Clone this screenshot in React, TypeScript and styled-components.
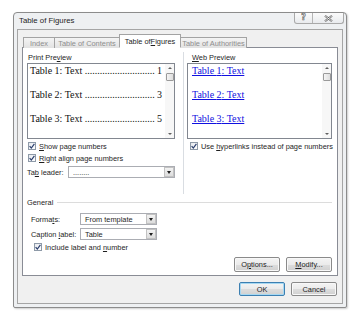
import React from 'react';
import styled, { createGlobalStyle } from 'styled-components';

const GlobalStyle = createGlobalStyle`
  html, body { margin: 0; padding: 0; background: #fff; }
  body {
    font-family: "Liberation Sans", Arial, sans-serif;
    font-size: 7.4px;
    color: #1e1e1e;
  }
  * { box-sizing: border-box; }
`;

const Page = styled.div`
  width: 360px;
  height: 317px;
  padding: 12px 0 0 13px;
`;

const Window = styled.div`
  width: 334px;
  height: 296px;
  border: 1px solid #8c8c8c;
  border-radius: 4px 4px 2px 2px;
  background: #eef0f2;
  padding: 0 3px 3px;
  display: flex;
  flex-direction: column;
  box-shadow: 1px 1px 2px rgba(0, 0, 0, 0.2);
`;

const TitleBar = styled.div`
  height: 16px;
  display: flex;
  align-items: flex-start;
`;

const Title = styled.div`
  padding: 3px 0 0 2px;
  font-size: 7.8px;
  line-height: 10px;
`;

const CaptionButtons = styled.div`
  margin-left: auto;
  margin-right: -1px;
  display: flex;
  height: 11px;
  border: 1px solid #a9a9a9;
  border-top: none;
  border-radius: 0 0 3px 3px;
  background: linear-gradient(#fbfbfb, #e9ebee);
`;

const CaptionButton = styled.div<{ $w: number; $last?: boolean }>`
  width: ${(p) => p.$w}px;
  display: flex;
  align-items: center;
  justify-content: center;
  border-right: ${(p) => (p.$last ? 'none' : '1px solid #b5b5b5')};
`;

const HelpGlyph = styled.span`
  font-family: "DejaVu Sans", sans-serif;
  font-weight: bold;
  font-size: 8px;
  line-height: 8px;
  color: #fff;
  -webkit-text-stroke: 0.6px #5a5a5a;
`;

const Client = styled.div`
  flex: 1;
  border: 1px solid #a5a5a5;
  background: #f0f0f0;
  display: flex;
  flex-direction: column;
  padding: 4px 4px 0 4px;
`;

const TabRow = styled.div`
  height: 14px;
  display: flex;
  align-items: flex-end;
  padding-left: 1px;
  margin-bottom: -1px;
  position: relative;
  z-index: 1;
`;

const Tab = styled.div<{ $w: number; $active?: boolean }>`
  width: ${(p) => p.$w}px;
  height: ${(p) => (p.$active ? 14 : 11)}px;
  margin-right: -1px;
  border: 1px solid #a3a3a3;
  border-bottom: ${(p) => (p.$active ? '1px solid #fff' : 'none')};
  background: ${(p) => (p.$active ? '#fff' : 'linear-gradient(#f4f4f4, #e2e2e2)')};
  color: ${(p) => (p.$active ? '#1e1e1e' : '#8e8e8e')};
  display: flex;
  align-items: center;
  justify-content: center;
  padding-top: ${(p) => (p.$active ? 0 : 1)}px;
  white-space: nowrap;
  position: relative;
  z-index: ${(p) => (p.$active ? 2 : 1)};
`;

const Panel = styled.div`
  height: 229px;
  border: 1px solid #898c95;
  background: #fff;
  padding: 4px 4px 3px 4px;
  display: flex;
  flex-direction: column;
`;

const TopSection = styled.div`
  height: 142px;
  display: flex;
`;

const Column = styled.div<{ $w: number }>`
  width: ${(p) => p.$w}px;
  display: flex;
  flex-direction: column;
`;

const Separator = styled.div`
  width: 1px;
  margin: 0 3px 0 8px;
  background: #d9dde2;
`;

const GroupLabel = styled.div<{ $pad?: number }>`
  height: 11px;
  line-height: 11px;
  padding-left: ${(p) => p.$pad ?? 1}px;
`;

const PreviewBox = styled.div`
  height: 76px;
  border: 1px solid #828790;
  display: flex;
  overflow: hidden;
`;

const PreviewContent = styled.div<{ $padLeft: number }>`
  flex: 1;
  min-width: 0;
  padding: 1px 3px 0 ${(p) => p.$padLeft}px;
  font-family: "Liberation Serif", "Times New Roman", serif;
  font-size: 10px;
  color: #111;
`;

const PreviewLine = styled.div`
  height: 24px;
  line-height: 12px;
  display: flex;
  white-space: nowrap;
`;

const PageNumber = styled.span`
  margin-left: auto;
`;

const WebLink = styled.span`
  color: #1010e0;
  text-decoration: underline;
`;

const ScrollBar = styled.div`
  width: 9px;
  background: #f7f7f7;
  display: flex;
  flex-direction: column;
  align-items: center;
`;

const Arrow = styled.div<{ $down?: boolean }>`
  width: 0;
  height: 0;
  border-left: 2px solid transparent;
  border-right: 2px solid transparent;
  ${(p) => (p.$down ? 'border-top: 2px solid #606060;' : 'border-bottom: 2px solid #606060;')}
  margin: ${(p) => (p.$down ? 'auto 0 3px' : '3px 0 0')};
`;

const Thumb = styled.div`
  width: 8px;
  height: 8px;
  margin-top: 4px;
  border: 1px solid #9a9a9a;
  border-radius: 1px;
  background: linear-gradient(90deg, #f4f4f4, #dedede);
`;

const CheckRow = styled.div<{ $pad?: number; $mt?: number }>`
  height: 12px;
  display: flex;
  align-items: center;
  white-space: nowrap;
  padding-left: ${(p) => p.$pad ?? 1}px;
  margin-top: ${(p) => p.$mt ?? 0}px;
`;

const Box = styled.span`
  width: 8px;
  height: 8px;
  border: 1px solid #8e9aa8;
  background: linear-gradient(135deg, #e6e9ee, #fff);
  display: flex;
  align-items: center;
  justify-content: center;
  margin-right: 3px;
  flex-shrink: 0;
`;

const FieldRow = styled.div<{ $mt: number; $pad: number }>`
  height: 12px;
  display: flex;
  align-items: center;
  margin-top: ${(p) => p.$mt}px;
  padding-left: ${(p) => p.$pad}px;
`;

const FieldLabel = styled.span<{ $w: number }>`
  width: ${(p) => p.$w}px;
  flex-shrink: 0;
`;

const Select = styled.div<{ $w: number }>`
  width: ${(p) => p.$w}px;
  height: 12px;
  border: 1px solid #abadb3;
  background: #fff;
  display: flex;
  align-items: center;
`;

const SelectValue = styled.span`
  flex: 1;
  padding-left: 4px;
  white-space: nowrap;
`;

const SelectButton = styled.span`
  width: 10px;
  height: 100%;
  border: 1px solid #c2c2c2;
  background: linear-gradient(#f3f3f3, #dcdcdc);
  display: flex;
  align-items: center;
  justify-content: center;
  &::after {
    content: '';
    border-left: 2px solid transparent;
    border-right: 2px solid transparent;
    border-top: 3px solid #1e1e1e;
  }
`;

const GeneralHeader = styled.div`
  height: 12px;
  margin-top: 2px;
  display: flex;
  align-items: center;
  padding-right: 1px;
  &::after {
    content: '';
    flex: 1;
    margin-left: 4px;
    border-top: 1px solid #dcdcdc;
  }
`;

const ButtonRow = styled.div<{ $pr: number }>`
  margin-top: auto;
  display: flex;
  justify-content: flex-end;
  gap: 6px;
  padding-right: ${(p) => p.$pr}px;
`;

const Button = styled.div<{ $h: number; $default?: boolean }>`
  width: 46px;
  height: ${(p) => p.$h}px;
  border: 1px solid ${(p) => (p.$default ? '#3c7fb1' : '#8a8a8a')};
  border-radius: 2px;
  background: linear-gradient(#f4f4f4 0%, #ebebeb 50%, #dddddd 51%, #d0d0d0 100%);
  box-shadow: inset 0 0 0 1px ${(p) => (p.$default ? '#a6d8f2' : '#f8f8f8')};
  display: flex;
  align-items: center;
  justify-content: center;
`;

const DialogButtons = styled.div`
  flex: 1;
  display: flex;
  justify-content: flex-end;
  align-items: center;
  gap: 6px;
  padding-right: 1px;
  padding-bottom: 1px;
`;

const Check = () => (
  <svg width="6" height="6" viewBox="0 0 6 6">
    <path d="M0.6 3.2 L2.3 5 L5.4 0.8" fill="none" stroke="#2b3f6e" strokeWidth="1.2" />
  </svg>
);

const CloseIcon = () => (
  <svg width="9" height="7" viewBox="0 0 9 7">
    <path d="M1 0.8 L8 6.2 M8 0.8 L1 6.2" stroke="#5a5a5a" strokeWidth="2" />
    <path d="M1 0.8 L8 6.2 M8 0.8 L1 6.2" stroke="#fff" strokeWidth="0.8" />
  </svg>
);

const CheckItem = ({ children, pad, mt }: { children: React.ReactNode; pad?: number; mt?: number }) => (
  <CheckRow $pad={pad} $mt={mt}>
    <Box>
      <Check />
    </Box>
    <span>{children}</span>
  </CheckRow>
);

const ScrollTrack = () => (
  <ScrollBar>
    <Arrow />
    <Thumb />
    <Arrow $down />
  </ScrollBar>
);

const DOTS = ' ' + '.'.repeat(28);
const entries = [
  { n: 1, page: 1 },
  { n: 2, page: 3 },
  { n: 3, page: 5 },
  { n: 4, page: 7 },
];

export default function App() {
  return (
    <Page>
      <GlobalStyle />
      <Window>
        <TitleBar>
          <Title>Table of Figures</Title>
          <CaptionButtons>
            <CaptionButton $w={18}>
              <HelpGlyph>?</HelpGlyph>
            </CaptionButton>
            <CaptionButton $w={30} $last>
              <CloseIcon />
            </CaptionButton>
          </CaptionButtons>
        </TitleBar>
        <Client>
          <TabRow>
            <Tab $w={32}>Index</Tab>
            <Tab $w={66}>Table of Contents</Tab>
            <Tab $w={62} $active>
              Table of <u>F</u>igures
            </Tab>
            <Tab $w={67}>Table of Authorities</Tab>
          </TabRow>
          <Panel>
            <TopSection>
              <Column $w={148}>
                <GroupLabel>
                  Print Pre<u>v</u>iew
                </GroupLabel>
                <PreviewBox>
                  <PreviewContent $padLeft={2}>
                    {entries.map((e) => (
                      <PreviewLine key={e.n}>
                        <span>
                          Table {e.n}: Text{DOTS}
                        </span>
                        <PageNumber>{e.page}</PageNumber>
                      </PreviewLine>
                    ))}
                  </PreviewContent>
                  <ScrollTrack />
                </PreviewBox>
                <CheckItem mt={1}>
                  <u>S</u>how page numbers
                </CheckItem>
                <CheckItem>
                  <u>R</u>ight align page numbers
                </CheckItem>
                <FieldRow $mt={2} $pad={0}>
                  <FieldLabel $w={41}>
                    Ta<u>b</u> leader:
                  </FieldLabel>
                  <Select $w={108}>
                    <SelectValue>........</SelectValue>
                    <SelectButton />
                  </Select>
                </FieldRow>
              </Column>
              <Separator />
              <Column $w={145}>
                <GroupLabel $pad={5}>
                  <u>W</u>eb Preview
                </GroupLabel>
                <PreviewBox>
                  <PreviewContent $padLeft={4}>
                    {entries.map((e) => (
                      <PreviewLine key={e.n}>
                        <WebLink>Table {e.n}: Text</WebLink>
                      </PreviewLine>
                    ))}
                  </PreviewContent>
                  <ScrollTrack />
                </PreviewBox>
                <CheckItem mt={1} pad={3}>
                  Use <u>h</u>yperlinks instead of page numbers
                </CheckItem>
              </Column>
            </TopSection>
            <GeneralHeader>General</GeneralHeader>
            <FieldRow $mt={5} $pad={4}>
              <FieldLabel $w={49}>
                Forma<u>t</u>s:
              </FieldLabel>
              <Select $w={77}>
                <SelectValue>From template</SelectValue>
                <SelectButton />
              </Select>
            </FieldRow>
            <FieldRow $mt={3} $pad={4}>
              <FieldLabel $w={49}>
                Caption <u>l</u>abel:
              </FieldLabel>
              <Select $w={77}>
                <SelectValue>Table</SelectValue>
                <SelectButton />
              </Select>
            </FieldRow>
            <CheckItem pad={7} mt={1}>
              Include label and <u>n</u>umber
            </CheckItem>
            <ButtonRow $pr={1}>
              <Button $h={15}>
                O<u>p</u>tions...
              </Button>
              <Button $h={15}>
                <u>M</u>odify...
              </Button>
            </ButtonRow>
          </Panel>
          <DialogButtons>
            <Button $h={14} $default>
              OK
            </Button>
            <Button $h={14}>Cancel</Button>
          </DialogButtons>
        </Client>
      </Window>
    </Page>
  );
}
